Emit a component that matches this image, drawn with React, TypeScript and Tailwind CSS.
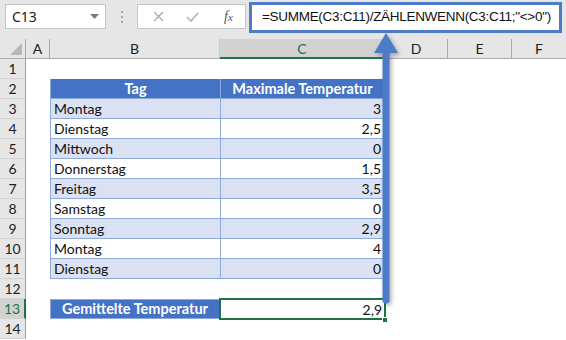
import React from "react";

const days = [
    { day: "Montag", temp: "3" },
    { day: "Dienstag", temp: "2,5" },
    { day: "Mittwoch", temp: "0" },
    { day: "Donnerstag", temp: "1,5" },
    { day: "Freitag", temp: "3,5" },
    { day: "Samstag", temp: "0" },
    { day: "Sonntag", temp: "2,9" },
    { day: "Montag", temp: "4" },
    { day: "Dienstag", temp: "0" },
];

const cols = "grid grid-cols-[26px_24px_170px_165px_63px_64px_1fr]";

function RowHead({ n, active }: { n: number; active?: boolean }) {
    return (
        <div
            className={`h-[20px] flex items-center justify-center text-[14px] border-b border-[#d4d4d4] ${active
                ? "bg-[#d2d2d2] text-[#217346] border-r-2 border-r-[#217346]"
                : "bg-[#e6e6e6] text-[#222] border-r border-r-[#9f9f9f]"
                }`}
        >
            {n}
        </div>
    );
}

function Toolbar() {
    return (
        <div className="h-[39px] bg-[#e6e6e6] flex items-start pt-[4px] pl-[5px] relative">
            {/* name box */}
            <div className="w-[101px] h-[25px] bg-white border border-[#c6c6c6] flex items-center justify-between pl-[6px] pr-[6px] text-[14px] text-[#222] font-['Noto_Sans',sans-serif]">
                <span>C13</span>
                <svg width="9" height="5" viewBox="0 0 9 5"><path d="M0 0h9L4.5 5z" fill="#7a7a7a" /></svg>
            </div>
            <div className="w-[31px] h-[25px] flex flex-col items-center justify-center gap-[3px]">
                <span className="w-[2px] h-[2px] bg-[#a8a8a8]" />
                <span className="w-[2px] h-[2px] bg-[#a8a8a8]" />
                <span className="w-[2px] h-[2px] bg-[#a8a8a8]" />
            </div>
            {/* cancel / enter / insert function */}
            <div className="w-[109px] h-[25px] bg-white border border-[#c6c6c6] flex items-center">
                <svg className="ml-[15px]" width="11" height="11" viewBox="0 0 11 11">
                    <path d="M1 1l9 9M10 1l-9 9" stroke="#a9a9a9" strokeWidth="1.3" />
                </svg>
                <svg className="ml-[22px]" width="13" height="10" viewBox="0 0 13 10">
                    <path d="M1 5l4 4 7-8" stroke="#b3b3b3" strokeWidth="1.6" fill="none" />
                </svg>
                <span className="ml-[25px] text-[14px] italic text-[#555] font-['Liberation_Serif',serif]">
                    f<span className="text-[11px]">x</span>
                </span>
            </div>
            {/* formula box */}
            <div className="absolute left-[249px] top-[2px] w-[313px] h-[31px] bg-white border-[3px] border-[#4e7bc8] flex items-center pl-[10px] text-[13.5px] tracking-[-0.3px] text-[#111] whitespace-nowrap font-['Liberation_Sans',sans-serif]">
                =SUMME(C3:C11)/ZÄHLENWENN(C3:C11;"&lt;&gt;0")
            </div>
        </div>
    );
}

function ColumnHeaders() {
    const letter = "flex items-center justify-center h-[20px] text-[14px] text-[#222] border-b border-[#ababab]";
    return (
        <div className={cols}>
            <div className="h-[20px] bg-[#e6e6e6] border-r border-b border-[#ababab] relative">
                <svg className="absolute right-[3px] bottom-[3px]" width="12" height="12" viewBox="0 0 12 12">
                    <path d="M12 0v12H0z" fill="#b8b8b8" />
                </svg>
            </div>
            <div className={`${letter} bg-[#e6e6e6] border-r`}>A</div>
            <div className={`${letter} bg-[#e6e6e6] border-r border-r-[#c8c8c8]`}>B</div>
            <div className="flex items-center justify-center h-[20px] text-[14px] bg-[#d2d2d2] text-[#217346] border-b-2 border-[#217346] border-r border-r-[#ababab]">C</div>
            <div className={`${letter} bg-[#e6e6e6] border-r`}>D</div>
            <div className={`${letter} bg-[#e6e6e6] border-r`}>E</div>
            <div className={`${letter} bg-[#e6e6e6]`}>F</div>
        </div>
    );
}

function EmptyRow({ n }: { n: number }) {
    return (
        <div className={cols}>
            <RowHead n={n} />
            <div className="col-span-6 h-[20px] bg-white" />
        </div>
    );
}

export default function App() {
    return (
        <div className="w-[566px] h-[340px] overflow-hidden bg-white relative font-['Lato',sans-serif]">
            <Toolbar />
            <ColumnHeaders />

            <EmptyRow n={1} />

            {/* table header */}
            <div className={cols}>
                <RowHead n={2} />
                <div className="h-[20px]" />
                <div className="h-[20px] bg-[#4472c4] text-white font-bold text-[14.5px] flex items-center justify-center border-l border-b border-[#8ea9db]">Tag</div>
                <div className="h-[20px] bg-[#4472c4] text-white font-bold text-[14.5px] flex items-center justify-center border-l border-r border-b border-[#8ea9db]">Maximale Temperatur</div>
                <div className="col-span-3" />
            </div>

            {days.map((d, i) => (
                <div key={i} className={cols}>
                    <RowHead n={i + 3} />
                    <div className="h-[20px]" />
                    <div className={`h-[20px] flex items-center pl-[3px] text-[14px] text-[#111] border-l border-b border-[#8ea9db] ${i % 2 === 0 ? "bg-[#d9e1f2]" : "bg-white"}`}>
                        {d.day}
                    </div>
                    <div className={`h-[20px] flex items-center justify-end pr-[3px] text-[14px] text-[#111] border-l border-r border-b border-[#8ea9db] ${i % 2 === 0 ? "bg-[#d9e1f2]" : "bg-white"}`}>
                        {d.temp}
                    </div>
                    <div className="col-span-3" />
                </div>
            ))}

            <EmptyRow n={12} />

            {/* average row */}
            <div className={cols}>
                <RowHead n={13} active />
                <div className="h-[20px]" />
                <div className="h-[20px] bg-[#4472c4] text-white font-bold text-[14.5px] flex items-center justify-center border border-[#8ea9db]">Gemittelte Temperatur</div>
                <div className="h-[20px] relative flex items-center justify-end pr-[3px] text-[14px] text-[#111]">
                    <div className="absolute -left-[1px] -top-[1px] -right-[1px] -bottom-[1px] border-2 border-[#217346]" />
                    <div className="absolute -right-[3px] -bottom-[4px] w-[6px] h-[6px] bg-[#217346] border border-white" />
                    <span className="relative">2,9</span>
                </div>
                <div className="col-span-3" />
            </div>

            <EmptyRow n={14} />

            {/* arrow from formula bar down to the result cell */}
            <svg className="absolute left-[370px] top-[30px] drop-shadow-[2px_2px_2px_rgba(0,0,0,0.3)]" width="34" height="278" viewBox="0 0 34 278">
                <path d="M16 3L4 23h8.5v247a3.5 3.5 0 0 0 7 0V23H28z" fill="#4e7bc8" />
            </svg>
        </div>
    );
}
